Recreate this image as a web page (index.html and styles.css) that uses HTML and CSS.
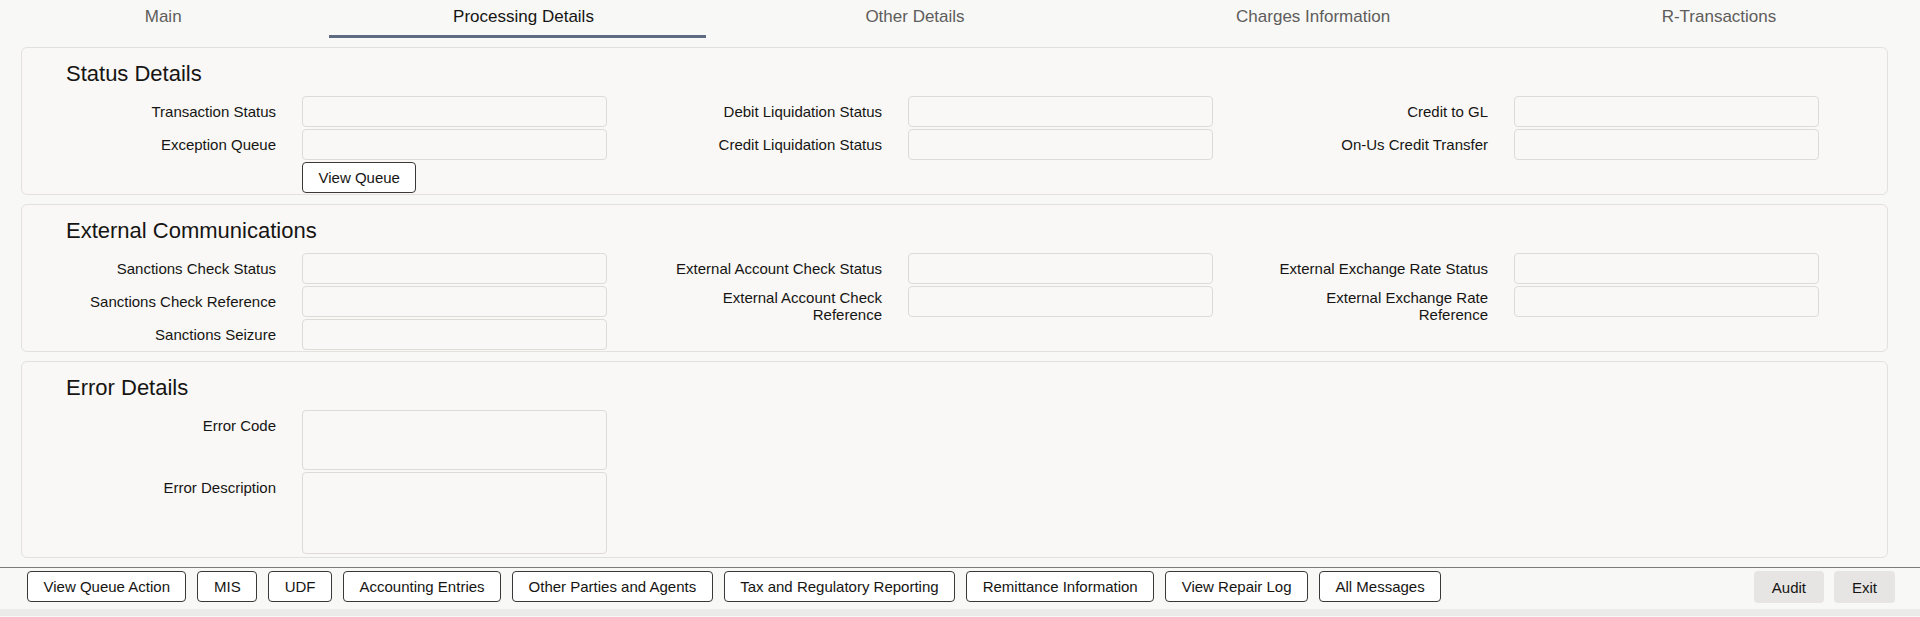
FILE: index.html
```html
<!DOCTYPE html>
<html lang="en">
<head>
<meta charset="utf-8">
<title>Processing Details</title>
<link rel="stylesheet" href="styles.css">
</head>
<body>
<nav class="tabs">
  <div class="tab">Main</div>
  <div class="tab active">Processing Details</div>
  <div class="tab">Other Details</div>
  <div class="tab">Charges Information</div>
  <div class="tab">R-Transactions</div>
</nav>

<main class="content">
  <section class="panel">
    <h2 class="panel-title">Status Details</h2>
    <div class="cols">
      <div class="col">
        <div class="field"><label class="label">Transaction Status</label><input class="input" type="text"></div>
        <div class="field"><label class="label">Exception Queue</label><input class="input" type="text"></div>
        <div class="field"><span class="label"></span><button class="btn">View Queue</button></div>
      </div>
      <div class="col">
        <div class="field"><label class="label">Debit Liquidation Status</label><input class="input" type="text"></div>
        <div class="field"><label class="label">Credit Liquidation Status</label><input class="input" type="text"></div>
      </div>
      <div class="col">
        <div class="field"><label class="label">Credit to GL</label><input class="input" type="text"></div>
        <div class="field"><label class="label">On-Us Credit Transfer</label><input class="input" type="text"></div>
      </div>
    </div>
  </section>

  <section class="panel">
    <h2 class="panel-title">External Communications</h2>
    <div class="cols">
      <div class="col">
        <div class="field"><label class="label">Sanctions Check Status</label><input class="input" type="text"></div>
        <div class="field"><label class="label">Sanctions Check Reference</label><input class="input" type="text"></div>
        <div class="field"><label class="label">Sanctions Seizure</label><input class="input" type="text"></div>
      </div>
      <div class="col">
        <div class="field"><label class="label">External Account Check Status</label><input class="input" type="text"></div>
        <div class="field"><label class="label two">External Account Check Reference</label><input class="input" type="text"></div>
      </div>
      <div class="col">
        <div class="field"><label class="label">External Exchange Rate Status</label><input class="input" type="text"></div>
        <div class="field"><label class="label two">External Exchange Rate Reference</label><input class="input" type="text"></div>
      </div>
    </div>
  </section>

  <section class="panel panel-last">
    <h2 class="panel-title">Error Details</h2>
    <div class="cols">
      <div class="col">
        <div class="field"><label class="label">Error Code</label><textarea class="input area-code"></textarea></div>
        <div class="field"><label class="label">Error Description</label><textarea class="input area-desc"></textarea></div>
      </div>
    </div>
  </section>
</main>

<footer class="footer">
  <div class="actions">
    <button class="btn">View Queue Action</button>
    <button class="btn">MIS</button>
    <button class="btn">UDF</button>
    <button class="btn">Accounting Entries</button>
    <button class="btn">Other Parties and Agents</button>
    <button class="btn">Tax and Regulatory Reporting</button>
    <button class="btn">Remittance Information</button>
    <button class="btn">View Repair Log</button>
    <button class="btn">All Messages</button>
  </div>
  <div class="end-actions">
    <button class="btn-flat">Audit</button>
    <button class="btn-flat">Exit</button>
  </div>
</footer>
<div class="status-strip"></div>
</body>
</html>
```

FILE: styles.css
```css
* {
  box-sizing: border-box;
}

html, body {
  margin: 0;
  padding: 0;
}

body {
  width: 1920px;
  height: 617px;
  overflow: hidden;
  background: #f8f8f7;
  font-family: "Liberation Sans", Arial, sans-serif;
  color: #161513;
}

/* Tabs */
.tabs {
  display: flex;
  height: 38px;
  padding: 0 8px 0 9px;
}

.tab {
  flex: 1 1 auto;
  position: relative;
  text-align: center;
  font-size: 17px;
  line-height: 20px;
  padding-top: 7px;
  color: #5e5d5b;
  white-space: nowrap;
}

.tab.active {
  color: #161513;
}

.tab.active::after {
  content: "";
  position: absolute;
  left: 12px;
  right: 24px;
  bottom: 0;
  height: 3px;
  background: #5f6b83;
}

/* Panels */
.content {
  display: flex;
  flex-direction: column;
  gap: 9px;
  margin-top: 9px;
}

.panel {
  margin: 0 32px 0 21px;
  background: #f9f8f6;
  border: 1px solid #e3e1dd;
  border-radius: 6px;
  padding: 13px 8px 1px 39px;
}

.panel-last {
  padding-bottom: 3px;
}

.panel-title {
  margin: 0 0 9px 0;
  padding-left: 5px;
  font-size: 22px;
  line-height: 26px;
  font-weight: normal;
  color: #161513;
}

.cols {
  display: grid;
  grid-template-columns: repeat(3, 606px);
}

.col {
  display: flex;
  flex-direction: column;
  gap: 2px;
}

.field {
  display: flex;
  align-items: flex-start;
}

.label {
  flex: 0 0 215px;
  width: 215px;
  margin-right: 26px;
  padding-top: 7px;
  text-align: right;
  font-size: 15px;
  line-height: 17px;
  color: #161513;
}

.label.two {
  padding-top: 3px;
}

.input {
  display: block;
  width: 305px;
  height: 31px;
  margin: 0;
  padding: 4px 8px;
  background: #f9f8f6;
  border: 1px solid #dedbd7;
  border-radius: 4px;
  font-family: inherit;
  font-size: 15px;
  resize: none;
  outline: none;
}

.area-code {
  height: 60px;
}

.area-desc {
  height: 82px;
}

.btn {
  height: 31px;
  margin: 0;
  padding: 0 15.5px;
  background: #ffffff;
  border: 1px solid #3a3937;
  border-radius: 4px;
  font-family: inherit;
  font-size: 15px;
  color: #161513;
  white-space: nowrap;
  cursor: pointer;
}

/* Footer */
.footer {
  display: flex;
  justify-content: space-between;
  margin-top: 9px;
  border-top: 1px solid #7d7c7a;
  padding: 3px 25px 0 27px;
  height: 42px;
}

.actions {
  display: flex;
  gap: 11px;
}

.end-actions {
  display: flex;
  gap: 10px;
}

.btn-flat {
  height: 32px;
  margin: 0;
  padding: 0 18px;
  background: #e6e5e3;
  border: none;
  border-radius: 4px;
  font-family: inherit;
  font-size: 15px;
  color: #161513;
  cursor: pointer;
}

.status-strip {
  height: 7px;
  background: #ebebea;
}
```
